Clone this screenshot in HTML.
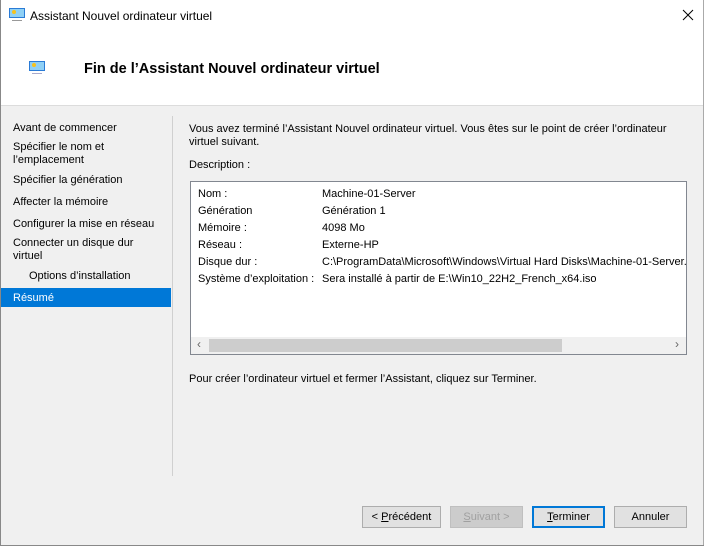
<!DOCTYPE html><html><head><style>
body{margin:0;width:704px;height:546px;overflow:hidden;font-family:"Liberation Sans",sans-serif;font-size:11px;color:#000;background:#f0f0f0;position:relative}
.a{position:absolute;white-space:nowrap}
.btn{position:absolute;top:506px;height:22px;width:76px;background:#e1e1e1;border:1px solid #adadad;box-sizing:border-box;text-align:center;line-height:20px;font-size:11px}
</style></head><body>
<div class="a" style="left:0;top:0;width:704px;height:105px;background:#fff;border-bottom:1px solid #dcdcdc"></div>
<div class="a" style="left:0;top:0;width:1px;height:546px;background:#888"></div>
<div class="a" style="left:703px;top:0;width:1px;height:546px;background:#aaa"></div>
<div class="a" style="left:0;top:545px;width:704px;height:1px;background:#888"></div>
<svg class="a" style="left:9px;top:8px" width="16" height="14"><rect x="0" y="0" width="16" height="10" fill="#2a7bd6"/><rect x="1" y="1" width="14" height="8" fill="#8fd0f5"/><circle cx="5" cy="4" r="2" fill="#f7c21b"/><rect x="3" y="12" width="10" height="1" fill="#999"/></svg>
<div class="a" style="left:30px;top:9px;font-size:12px">Assistant Nouvel ordinateur virtuel</div>
<svg class="a" style="left:682px;top:9px" width="12" height="12"><path d="M1 1L11 11M11 1L1 11" stroke="#000" stroke-width="1"/></svg>
<svg class="a" style="left:29px;top:61px" width="16" height="14"><rect x="0" y="0" width="16" height="10" fill="#2a7bd6"/><rect x="1" y="1" width="14" height="8" fill="#8fd0f5"/><circle cx="5" cy="4" r="2" fill="#f7c21b"/><rect x="3" y="12" width="10" height="1" fill="#aac"/></svg>
<div class="a" style="left:84px;top:61px;font-size:14.5px;font-weight:bold">Fin de l’Assistant Nouvel ordinateur virtuel</div>
<div class="a" style="left:172px;top:116px;width:1px;height:360px;background:#d0d0d0"></div>
<div class="a" style="left:13px;top:122px">Avant de commencer</div>
<div class="a" style="left:13px;top:141px;line-height:13px">Spécifier le nom et<br>l’emplacement</div>
<div class="a" style="left:13px;top:174px">Spécifier la génération</div>
<div class="a" style="left:13px;top:196px">Affecter la mémoire</div>
<div class="a" style="left:13px;top:218px">Configurer la mise en réseau</div>
<div class="a" style="left:13px;top:237px;line-height:13px">Connecter un disque dur<br>virtuel</div>
<div class="a" style="left:29px;top:270px">Options d’installation</div>
<div class="a" style="left:1px;top:288px;width:170px;height:19px;background:#0078d7"></div>
<div class="a" style="left:13px;top:292px;color:#fff">Résumé</div>
<div class="a" style="left:189px;top:123px;line-height:13px">Vous avez terminé l’Assistant Nouvel ordinateur virtuel. Vous êtes sur le point de créer l’ordinateur<br>virtuel suivant.</div>
<div class="a" style="left:189px;top:159px">Description :</div>
<div class="a" style="left:190px;top:181px;width:497px;height:174px;background:#fff;border:1px solid #828790;box-sizing:border-box;overflow:hidden">
<div style="position:absolute;left:7px;top:4px;line-height:17px">Nom :<br>Génération<br>Mémoire :<br>Réseau :<br>Disque dur :<br>Système d’exploitation :</div>
<div style="position:absolute;left:131px;top:4px;line-height:17px;white-space:nowrap">Machine-01-Server<br>Génération 1<br>4098 Mo<br>Externe-HP<br>C:\ProgramData\Microsoft\Windows\Virtual Hard Disks\Machine-01-Server.vhdx<br>Sera installé à partir de E:\Win10_22H2_French_x64.iso</div>
<div style="position:absolute;left:0;top:155px;width:495px;height:17px;background:#f0f0f0"></div>
<div style="position:absolute;left:18px;top:157px;width:353px;height:13px;background:#cdcdcd"></div>
<div style="position:absolute;left:6px;top:155px;color:#666;font-size:12px">‹</div>
<div style="position:absolute;left:484px;top:155px;color:#666;font-size:12px">›</div>
</div>
<div class="a" style="left:189px;top:373px">Pour créer l’ordinateur virtuel et fermer l’Assistant, cliquez sur Terminer.</div>
<div class="btn" style="left:362px;width:79px">&lt; <u>P</u>récédent</div>
<div class="btn" style="left:450px;width:73px;color:#a0a0a0;background:#ccc;border-color:#bfbfbf"><u>S</u>uivant &gt;</div>
<div class="btn" style="left:532px;width:73px;border:2px solid #0078d7;line-height:18px"><u>T</u>erminer</div>
<div class="btn" style="left:614px;width:73px">Annuler</div>
</body></html>
